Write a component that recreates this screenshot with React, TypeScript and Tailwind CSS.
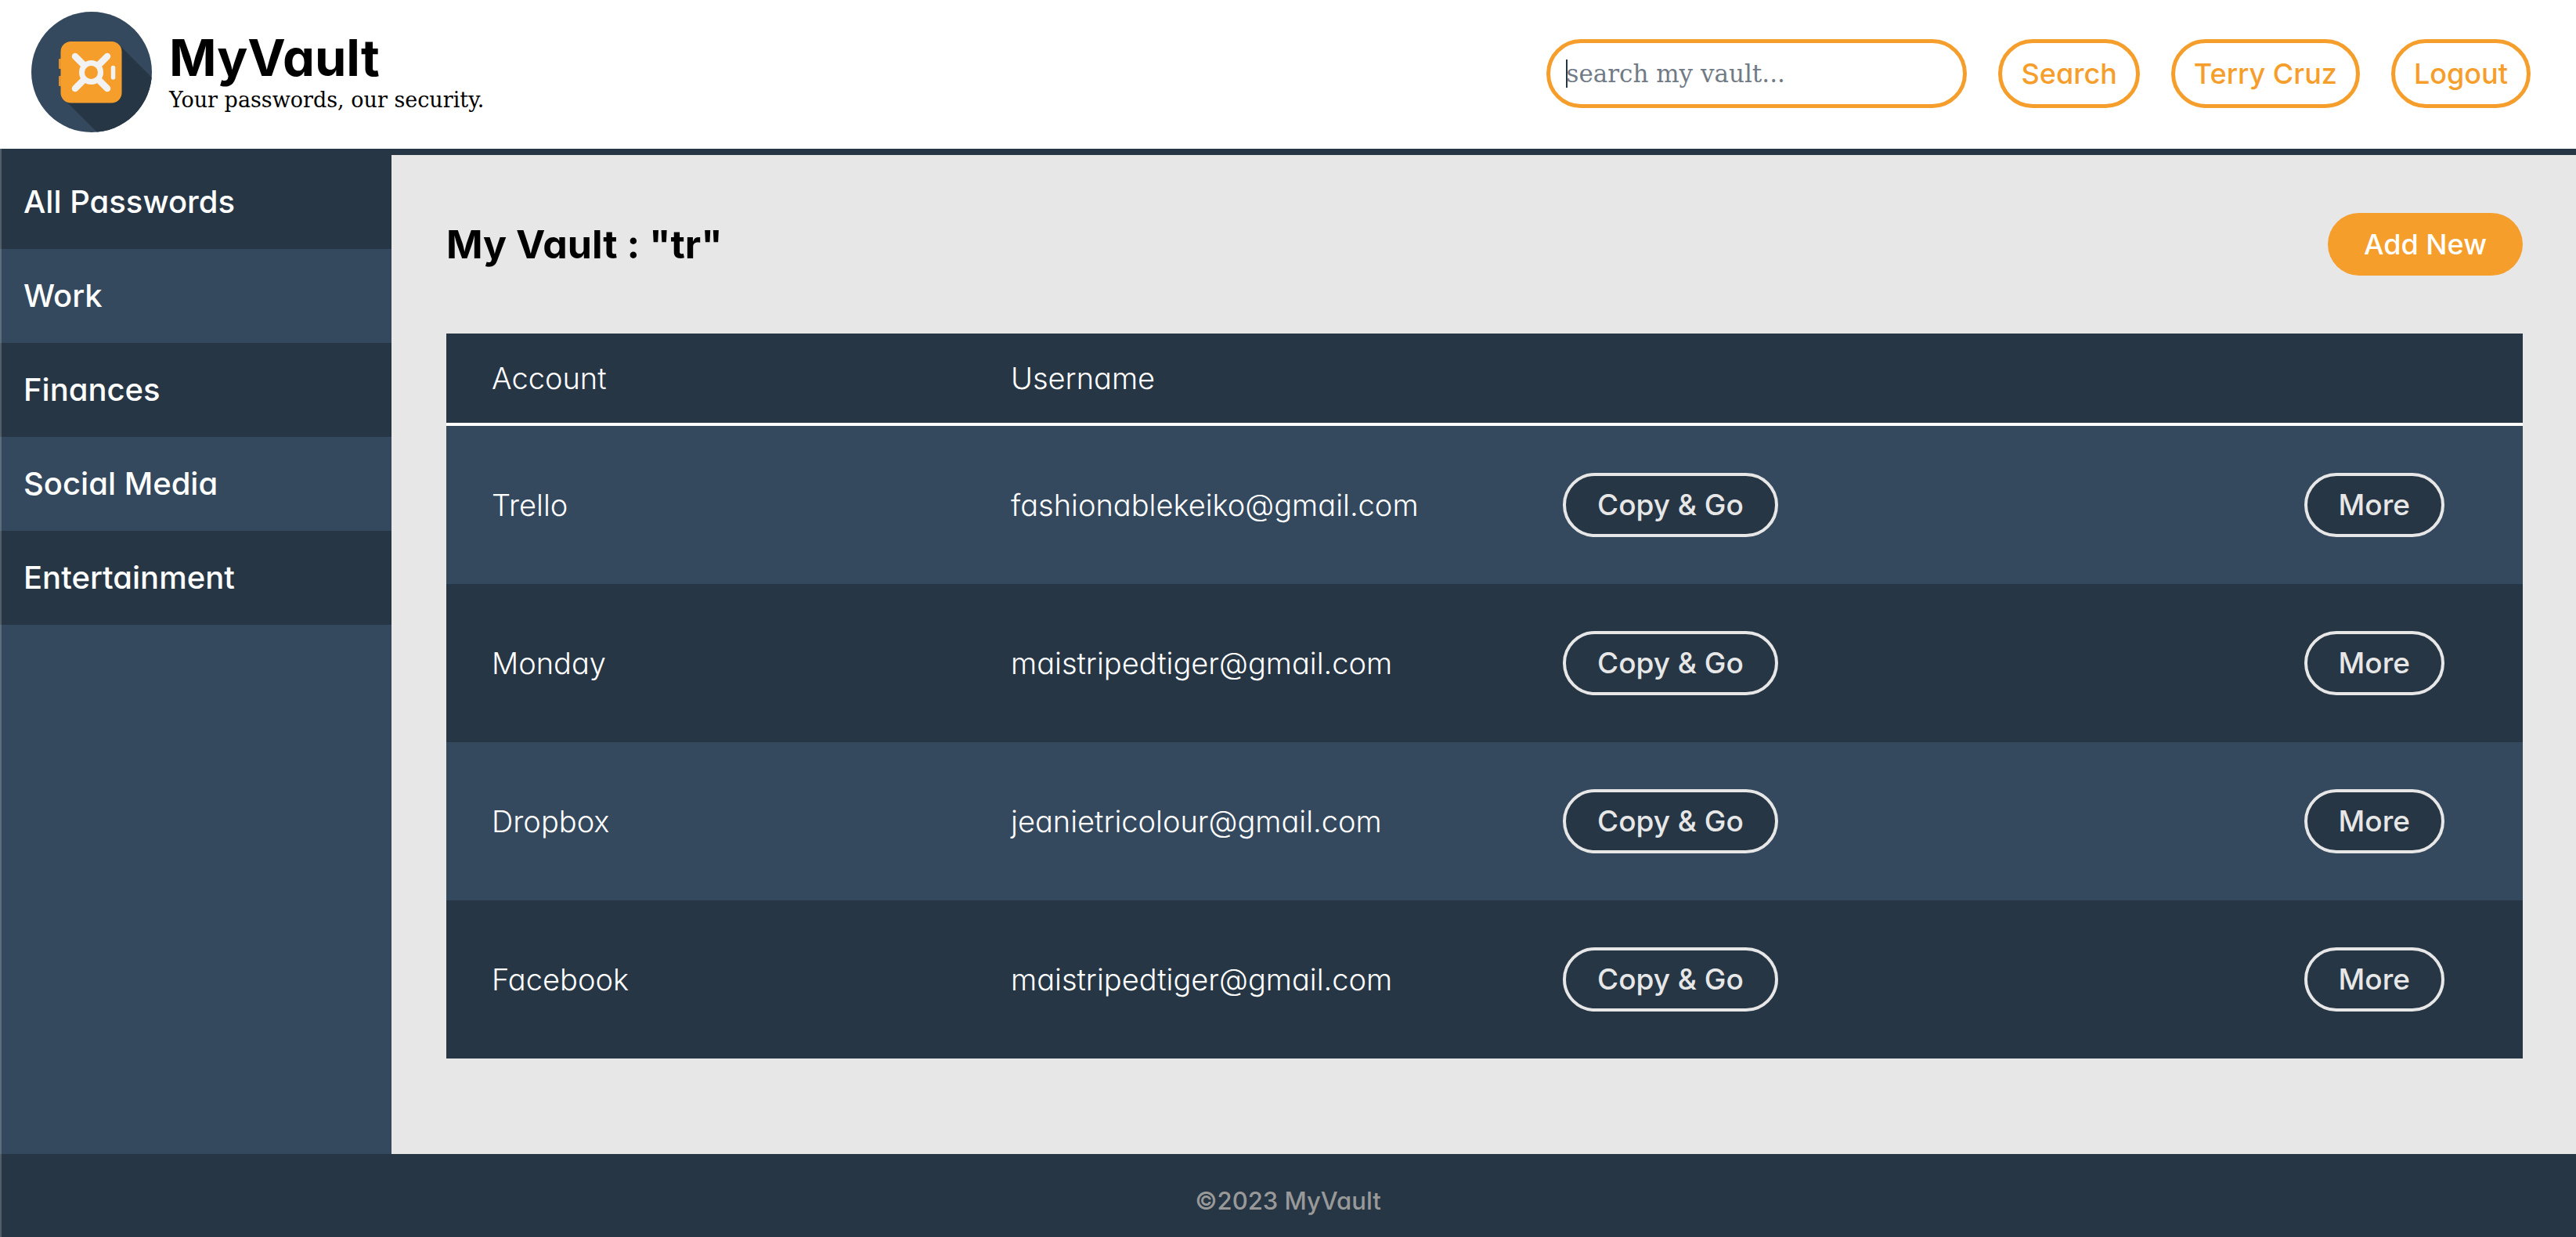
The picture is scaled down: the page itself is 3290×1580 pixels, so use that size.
import React from "react";

const categories = ["All Passwords", "Work", "Finances", "Social Media", "Entertainment"];

const accounts = [
  { name: "Trello", username: "fashionablekeiko@gmail.com" },
  { name: "Monday", username: "maistripedtiger@gmail.com" },
  { name: "Dropbox", username: "jeanietricolour@gmail.com" },
  { name: "Facebook", username: "maistripedtiger@gmail.com" },
];

function VaultLogo() {
  return (
    <svg viewBox="0 0 154 154" className="size-[154px] shrink-0" aria-hidden="true">
      <defs>
        <clipPath id="disc">
          <circle cx="77" cy="77" r="77" />
        </clipPath>
      </defs>
      <circle cx="77" cy="77" r="77" fill="#34495e" />
      <path d="M111 41 L190 120 V190 H120 L42 112 Z" fill="#263645" clipPath="url(#disc)" />
      <rect x="35" y="60" width="8" height="13" rx="1" fill="#e0912f" />
      <rect x="35" y="82" width="8" height="13" rx="1" fill="#e0912f" />
      <rect x="37.5" y="38" width="78" height="78.5" rx="13" fill="#f69e2b" />
      <path
        d="M56 57 L97 98 M97 57 L56 98"
        stroke="#f2f2f2"
        strokeWidth="8.5"
        strokeLinecap="round"
      />
      <circle cx="76.5" cy="77.5" r="12" fill="#f69e2b" stroke="#f2f2f2" strokeWidth="7" />
      <path d="M104.5 71.5 V84" stroke="#f2f2f2" strokeWidth="5.5" strokeLinecap="round" />
    </svg>
  );
}

function HeaderButton({ children }: { children: React.ReactNode }) {
  return (
    <button
      type="button"
      className="h-[88px] rounded-[44px] border-5 border-[#f69e2b] bg-white px-6 text-[36px] font-medium whitespace-nowrap text-[#f69e2b]"
    >
      {children}
    </button>
  );
}

function RowButton({ children }: { children: React.ReactNode }) {
  return (
    <button
      type="button"
      className="h-[82px] rounded-[41px] border-4 border-[#e7e7e7] bg-[#263645] px-10 text-[37px] font-medium whitespace-nowrap text-[#e7e7e7]"
    >
      {children}
    </button>
  );
}

export default function App() {
  return (
    <div className="relative flex min-h-screen flex-col bg-[#e7e7e7] font-['Inter',sans-serif] text-black [font-feature-settings:'cv11']">
      <header className="flex h-[198px] items-center justify-between border-b-8 border-[#263645] bg-white pr-[58px] pb-0.5 pl-10">
        <a href="#" className="flex items-center gap-[22px] pb-1">
          <VaultLogo />
          <span className="flex flex-col pt-2">
            <span className="text-[65px] leading-[64px] font-bold">MyVault</span>
            <span className="font-['DejaVu_Serif',serif] text-[27px] leading-[44px]">
              Your passwords, our security.
            </span>
          </span>
        </a>
        <form className="flex items-center gap-10">
          <div className="relative">
            <input
              type="text"
              aria-label="Search my vault"
              placeholder="search my vault..."
              className="h-[88px] w-[537px] rounded-[44px] border-5 border-[#f69e2b] bg-white px-5 font-['DejaVu_Serif',serif] text-[31px] outline-none placeholder:text-[#717b86]"
            />
            <span className="absolute top-[26px] left-[25px] h-9 w-0.5 bg-[#263645]" />
          </div>
          <HeaderButton>Search</HeaderButton>
          <HeaderButton>Terry Cruz</HeaderButton>
          <HeaderButton>Logout</HeaderButton>
        </form>
      </header>

      <div className="flex flex-1">
        <nav className="w-[500px] shrink-0 bg-[#34495e]">
          <ul>
            {categories.map((name) => (
              <li key={name} className="odd:bg-[#263645]">
                <a
                  href="#"
                  className="flex h-[120px] items-center px-[30px] text-[40px] font-medium text-white"
                >
                  {name}
                </a>
              </li>
            ))}
          </ul>
        </nav>

        <main className="flex-1 pt-[74px] pr-[68px] pl-[70px]">
          <div className="mb-[74px] flex h-20 items-center justify-between">
            <h1 className="text-[50px] font-bold">My Vault : "tr"</h1>
            <button
              type="button"
              className="h-20 rounded-[40px] bg-[#f69e2b] px-[46px] text-[36px] font-medium whitespace-nowrap text-white"
            >
              Add New
            </button>
          </div>

          <table className="w-full table-fixed border-separate border-spacing-0 text-left text-[38px] font-light text-white">
            <thead>
              <tr className="h-[118px] bg-[#263645]">
                <th className="border-b-4 border-white px-[58px] font-light">Account</th>
                <th className="border-b-4 border-white px-[58px] font-light">Username</th>
                <td className="border-b-4 border-white" />
                <td className="border-b-4 border-white" />
              </tr>
            </thead>
            <tbody>
              {accounts.map((account) => (
                <tr key={account.name} className="h-[202px] odd:bg-[#34495e] even:bg-[#263645]">
                  <td className="px-[58px]">{account.name}</td>
                  <td className="px-[58px]">{account.username}</td>
                  <td className="px-[100px]">
                    <RowButton>Copy &amp; Go</RowButton>
                  </td>
                  <td className="px-[100px] text-right">
                    <RowButton>More</RowButton>
                  </td>
                </tr>
              ))}
            </tbody>
          </table>
        </main>
      </div>

      <footer className="bg-[#263645] pt-9 pb-[22px] text-center text-[31px] leading-[48px] font-medium text-[#999]">
        ©2023 MyVault
      </footer>

      <div className="pointer-events-none absolute inset-y-0 left-0 w-0.5 bg-white/20" />
    </div>
  );
}
